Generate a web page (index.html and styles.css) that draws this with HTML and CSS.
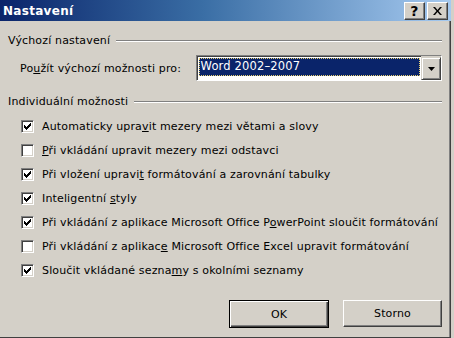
FILE: index.html
```html
<!DOCTYPE html>
<html lang="cs">
<head>
  <meta charset="UTF-8">
  <title>Nastavení</title>
  <link rel="stylesheet" href="styles.css">
</head>
<body>
  <div class="dialog">
    <div class="titlebar">
      <span class="title">Nastavení</span>
      <div class="title-buttons">
        <span class="tbtn">?</span>
        <span class="tbtn">
          <svg width="9" height="8" viewBox="0 0 9 8"><path d="M0 0h2l2.5 3 2.5-3h2L5.5 4 9 8H7L4.5 5 2 8H0l3.5-4z" fill="#000"/></svg>
        </span>
      </div>
    </div>

    <div class="content">
      <div class="group-title"><span>Výchozí nastavení</span><span class="rule"></span></div>

      <div class="default-row">
        <label class="default-label">Po<u>u</u>žít výchozí možnosti pro:</label>
        <div class="combo">
          <div class="combo-value"><span>Word 2002–2007</span></div>
          <div class="combo-btn">
            <svg width="7" height="4" viewBox="0 0 7 4"><path d="M0 0h7L3.5 4z" fill="#000"/></svg>
          </div>
        </div>
      </div>

      <div class="group-title second"><span>Individuální možnosti</span><span class="rule"></span></div>

      <ul class="options">
        <li><span class="check on"></span><span>Automaticky upra<u>v</u>it mezery mezi větami a slovy</span></li>
        <li><span class="check"></span><span><u>P</u>ři vkládání upravit mezery mezi odstavci</span></li>
        <li><span class="check on"></span><span>Při vložení upravi<u>t</u> formátování a zarovnání tabulky</span></li>
        <li><span class="check on"></span><span>Inteligentní <u>s</u>tyly</span></li>
        <li><span class="check on"></span><span>Při vkládání z aplikace Microsoft Office P<u>o</u>werPoint sloučit formátování</span></li>
        <li><span class="check"></span><span>Při vkládání z aplikac<u>e</u> Microsoft Office Excel upravit formátování</span></li>
        <li><span class="check on"></span><span>Sloučit vkládané sezna<u>m</u>y s okolními seznamy</span></li>
      </ul>

      <div class="buttons">
        <button class="btn default">OK</button>
        <button class="btn">Storno</button>
      </div>
    </div>
  </div>
</body>
</html>
```

FILE: styles.css
```css
* {
  box-sizing: border-box;
  margin: 0;
  padding: 0;
}

body {
  background: #d4d0c8;
  font-family: "DejaVu Sans", sans-serif;
  font-size: 11px;
  letter-spacing: 0.15px;
  color: #000;
  width: 454px;
  height: 338px;
  overflow: hidden;
}

.dialog {
  width: 451px;
  height: 338px;
  border-right: 1px solid #404040;
  border-bottom: 1px solid #404040;
  display: flex;
  flex-direction: column;
}

.titlebar {
  height: 21px;
  margin-right: -1px;
  background: linear-gradient(90deg, #0a246a 0%, #3a6ea5 45%, #a6caf0 100%);
  display: flex;
  align-items: center;
  justify-content: space-between;
  padding: 0 3px 0 3px;
}

.title {
  color: #fff;
  font-weight: bold;
  font-size: 12px;
  letter-spacing: 0.3px;
}

.title-buttons {
  display: flex;
  gap: 2px;
}

.tbtn {
  width: 21px;
  height: 18px;
  background: #d4d0c8;
  border: 1px solid;
  border-color: #fff #404040 #404040 #fff;
  box-shadow: inset -1px -1px 0 #808080;
  display: flex;
  align-items: center;
  justify-content: center;
  font-weight: bold;
  font-size: 14px;
  line-height: 1;
}

.content {
  flex: 1;
  padding-left: 8px;
  padding-right: 7px;
  border-right: 1px solid #808080;
}

.group-title {
  display: flex;
  align-items: center;
  gap: 6px;
  height: 13px;
  line-height: 13px;
  margin-top: 13px;
  white-space: nowrap;
}

.group-title.second {
  margin-top: 14px;
}

.rule {
  flex: 1;
  height: 2px;
  border-top: 1px solid #808080;
  border-bottom: 1px solid #fff;
}

.default-row {
  display: flex;
  align-items: center;
  margin-top: 8px;
  padding-left: 12px;
}

.default-label {
  width: 176px;
}

.combo {
  width: 247px;
  height: 26px;
  border: 1px solid;
  border-color: #808080 #fff #fff #808080;
  display: flex;
}

.combo-value {
  flex: 1;
  background: #fff;
  border-top: 1px solid #404040;
  border-left: 1px solid #404040;
  padding: 1px 1px 4px 1px;
  display: flex;
}

.combo-value span {
  flex: 1;
  background: #0a246a;
  color: #fff;
  font-size: 11.5px;
  outline: 1px dotted #e8d070;
  outline-offset: -1px;
  padding-left: 2px;
  line-height: 16px;
}

.combo-btn {
  width: 20px;
  height: 23px;
  margin-top: 1px;
  background: #d4d0c8;
  border: 1px solid;
  border-color: #d4d0c8 #404040 #404040 #d4d0c8;
  box-shadow: inset 1px 1px 0 #fff, inset -1px -1px 0 #808080;
  display: flex;
  align-items: center;
  justify-content: center;
}

.options {
  list-style: none;
  margin-top: 6px;
  padding-left: 13px;
}

.options li {
  height: 24px;
  display: flex;
  align-items: center;
  gap: 8px;
  white-space: nowrap;
}

.check {
  width: 13px;
  height: 13px;
  background: #fff;
  border: 1px solid;
  border-color: #808080 #fff #fff #808080;
  box-shadow: inset 1px 1px 0 #404040, inset -1px -1px 0 #d4d0c8;
  flex-shrink: 0;
}

.check.on {
  background: #fff url("data:image/svg+xml,%3Csvg xmlns='http://www.w3.org/2000/svg' width='7' height='7'%3E%3Cpath d='M0 2h1v1h1v1h1V3h1V2h1V1h1V0h1v3H6v1H5v1H4v1H3v1H2V6H1V5H0z' fill='%23000'/%3E%3C/svg%3E") no-repeat 2px 2px;
}

.buttons {
  display: flex;
  justify-content: flex-end;
  gap: 14px;
  margin-top: 18px;
}

.btn {
  font-family: inherit;
  font-size: 11px;
  letter-spacing: 0.15px;
  width: 99px;
  height: 27px;
  background: #d4d0c8;
  border: 1px solid;
  border-color: #fff #404040 #404040 #fff;
  box-shadow: inset -1px -1px 0 #808080;
}

.btn.default {
  width: 100px;
  height: 28px;
  border: 1px solid #000;
  box-shadow: inset 1px 1px 0 #fff, inset -1px -1px 0 #404040, inset -2px -2px 0 #808080;
}
```
